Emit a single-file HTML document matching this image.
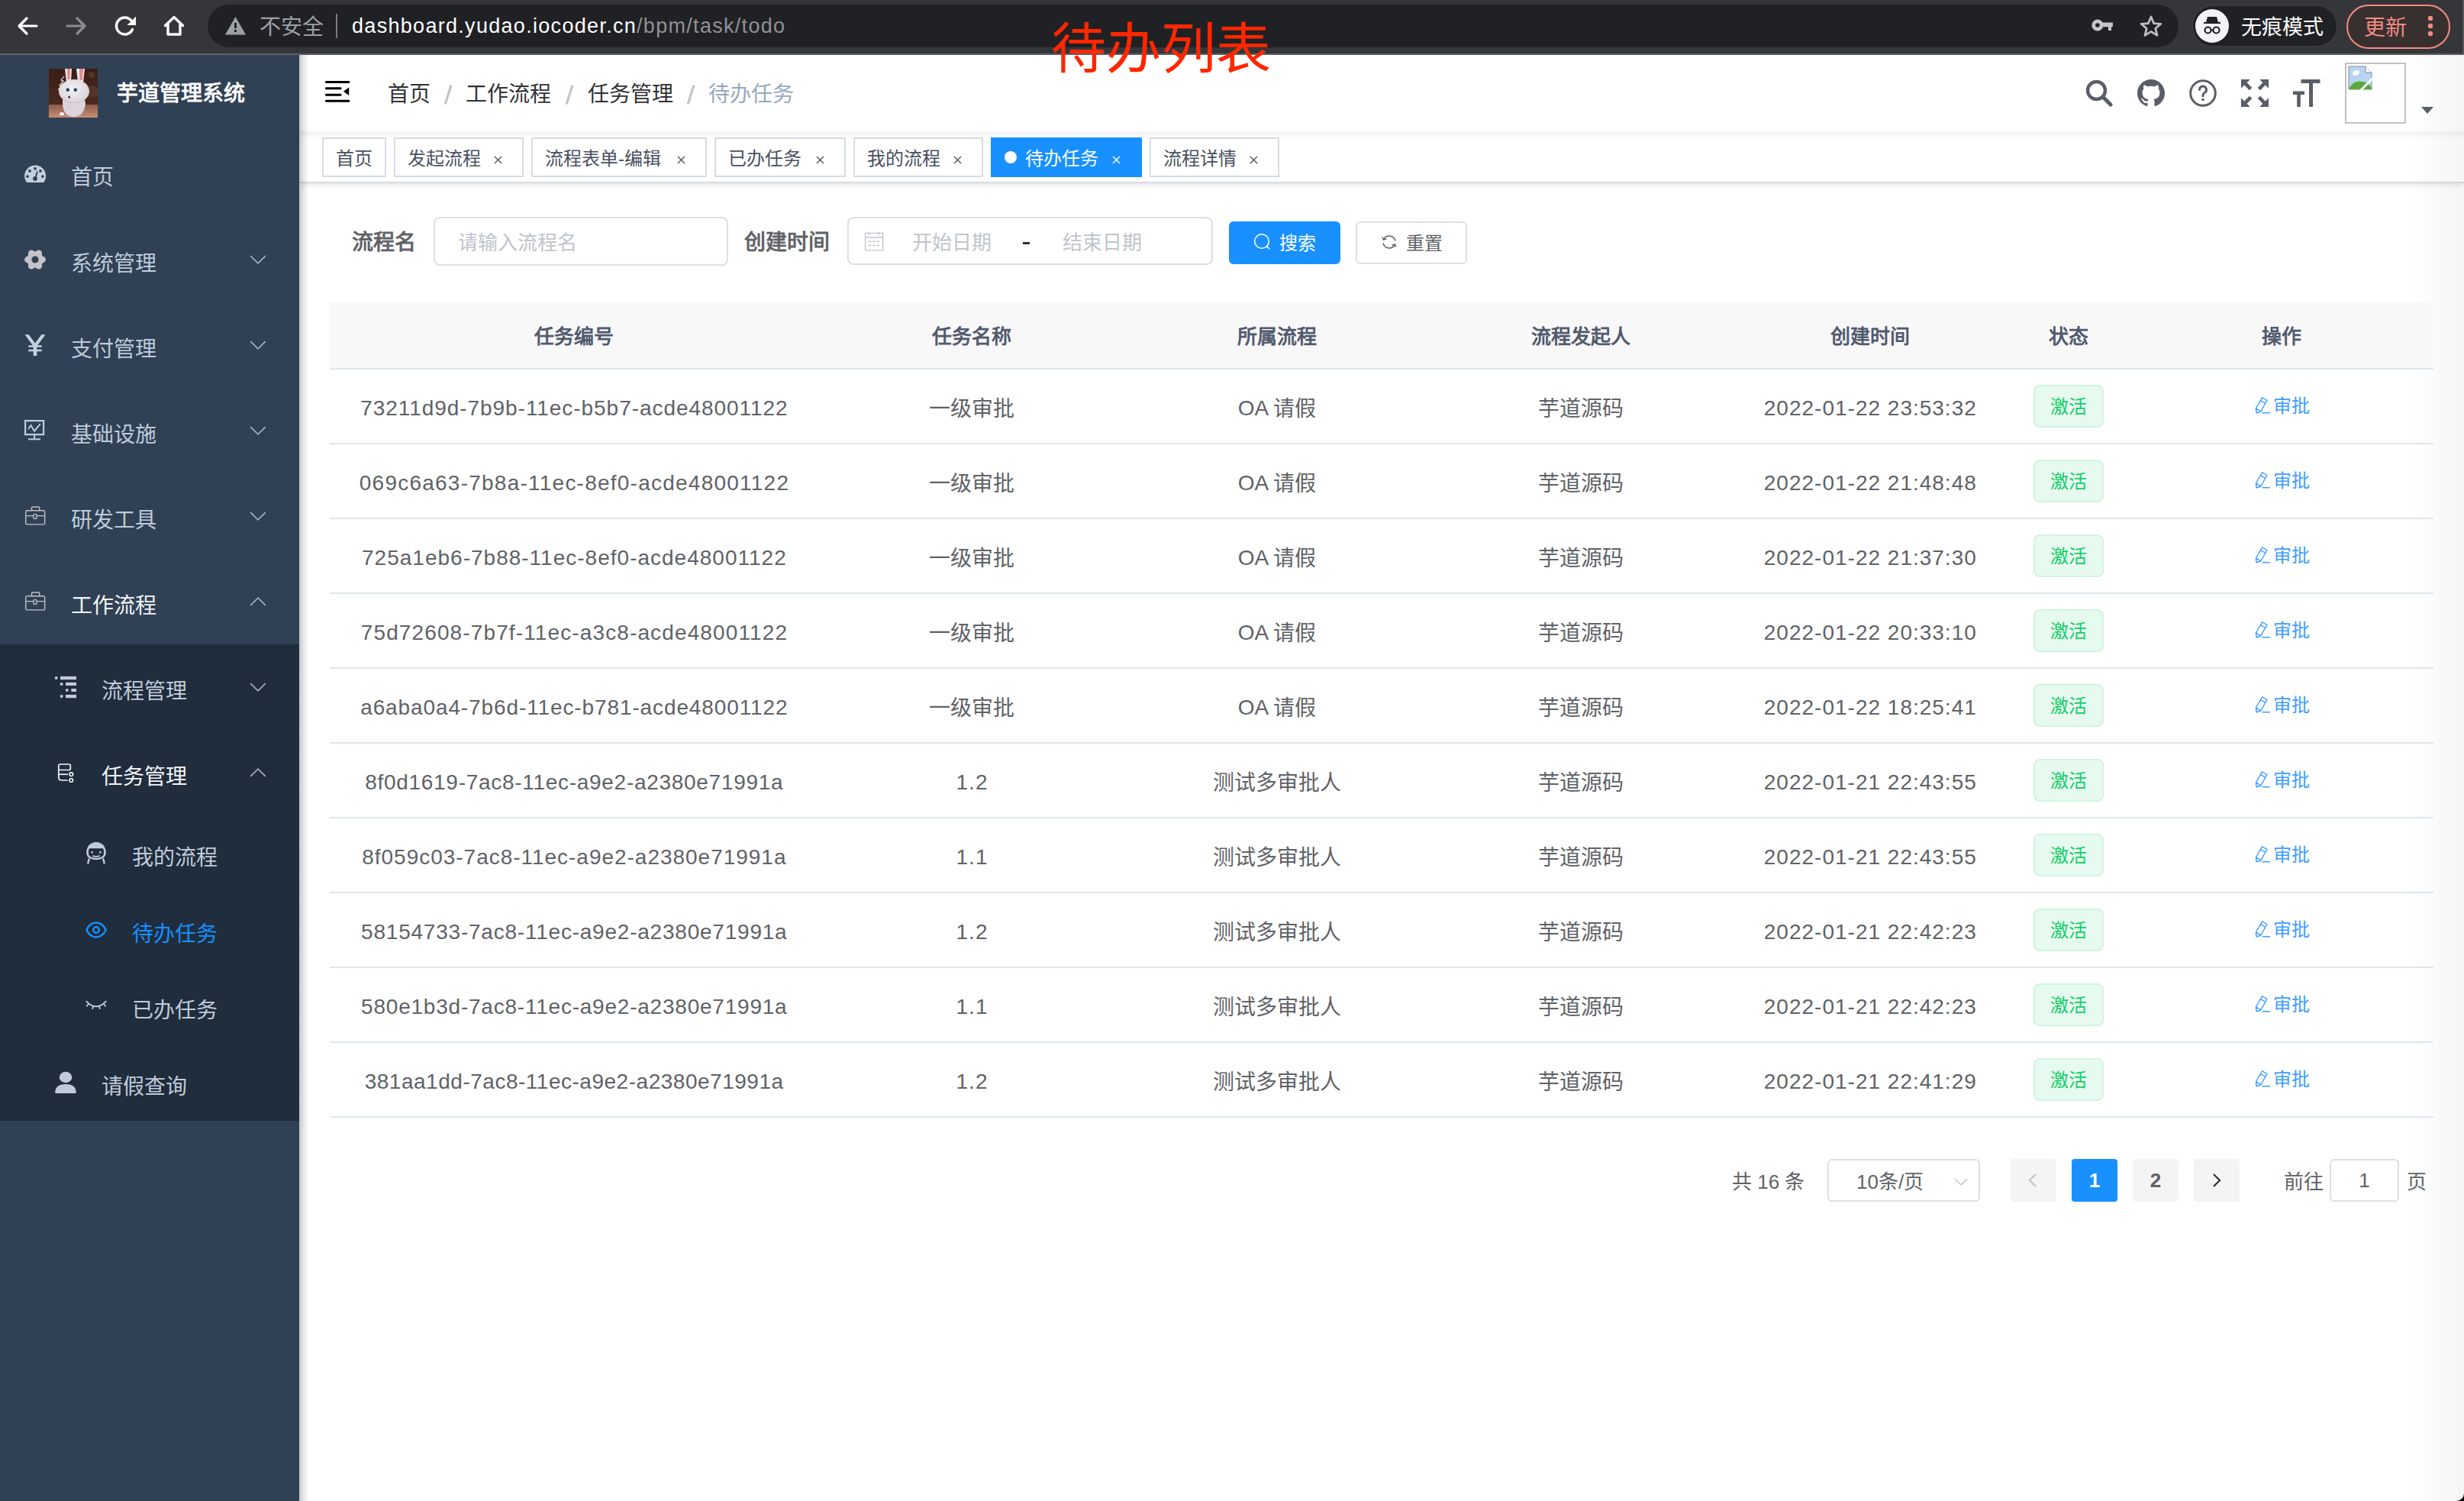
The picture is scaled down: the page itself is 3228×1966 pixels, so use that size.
<!DOCTYPE html>
<html lang="zh-CN">
<head>
<meta charset="utf-8">
<style>
*{box-sizing:border-box;margin:0;padding:0}
html,body{width:3228px;height:1966px;overflow:hidden;background:#fff}
body{position:relative;font-family:"Liberation Sans",sans-serif;color:#606266}
.abs{position:absolute}
.t{position:absolute;white-space:nowrap;line-height:1}
/* toolbar */
#tb{left:0;top:0;width:3228px;height:70px;background:#35363a}
#tbline{left:0;top:70px;width:3228px;height:2px;background:#5f6064}
#omni{left:272px;top:6px;width:2582px;height:56px;border-radius:28px;background:#202124}
/* sidebar */
#side{left:0;top:72px;width:392px;height:1894px;background:#304156}
#sub{left:0;top:844px;width:392px;height:624px;background:#1f2d3d}
.mi{position:absolute;font-size:28px;color:#bfcbd9;line-height:1;white-space:nowrap}
/* navbar */
#nav{left:392px;top:72px;width:2836px;height:100px;background:#fff;}
#tags{left:392px;top:172px;width:2836px;height:68px;background:#fff;border-bottom:2px solid #d8dce5;box-shadow:0 4px 6px -2px rgba(0,0,0,.12)}
.tag{position:absolute;top:180px;height:52px;border:2px solid #d8dce5;background:#fff;color:#495060;font-size:24px;line-height:48px;white-space:nowrap}
.tag .x{position:absolute;top:0;font-size:22px}
#shadowL{left:392px;top:72px;width:14px;height:1894px;background:linear-gradient(90deg,rgba(0,21,41,.24) 0,rgba(0,21,41,.12) 5px,rgba(0,21,41,.03) 10px,rgba(0,21,41,0) 14px)}
.th{position:absolute;top:396px;font-size:26px;font-weight:bold;color:#515a6e;line-height:86px;text-align:center;white-space:nowrap}
.td{position:absolute;font-size:28px;color:#606266;line-height:1;text-align:center;white-space:nowrap}
.stag{position:absolute;left:2664px;width:92px;height:56px;border:2px solid #d0f5e0;background:#e7faf0;border-radius:8px;color:#13ce66;font-size:24px;text-align:center;line-height:54px}
.op{position:absolute;left:2954px;width:80px;height:56px;color:#409eff;font-size:24px;line-height:1}
.rowline{position:absolute;left:432px;width:2756px;height:2px;background:#dfe6ec}
</style>
</head>
<body>
<!-- browser toolbar -->
<div id="tb" class="abs"></div>
<div id="tbline" class="abs"></div>
<div id="omni" class="abs"></div>
<div class="abs" style="left:3226px;top:0;width:2px;height:70px;background:#55565a"></div>

<!-- toolbar icons -->
<svg class="abs" style="left:20px;top:18px" width="32" height="32" viewBox="0 0 32 32"><path d="M28 16H6M15 6L5 16l10 10" fill="none" stroke="#fff" stroke-width="3.2" stroke-linecap="round" stroke-linejoin="round"/></svg>
<svg class="abs" style="left:84px;top:18px" width="32" height="32" viewBox="0 0 32 32"><path d="M4 16h22M17 6l10 10-10 10" fill="none" stroke="#8c8d8f" stroke-width="3.2" stroke-linecap="round" stroke-linejoin="round"/></svg>
<svg class="abs" style="left:148px;top:18px" width="32" height="32" viewBox="0 0 32 32"><path d="M25.5 20.5A11 11 0 1 1 24 9" fill="none" stroke="#fff" stroke-width="3.4" stroke-linecap="round"/><path d="M30 3.5V15H18.5z" fill="#fff"/></svg>
<svg class="abs" style="left:212px;top:18px" width="32" height="32" viewBox="0 0 32 32"><path d="M4.5 15.5L16 4.5l11.5 11M8 13v14h16V13" fill="none" stroke="#fff" stroke-width="3.4" stroke-linecap="round" stroke-linejoin="round"/></svg>
<svg class="abs" style="left:295px;top:22px" width="27" height="24" viewBox="0 0 27 24"><path d="M13.5 0L27 23.5H0z" fill="#9aa0a6"/><rect x="12" y="8" width="3" height="7" fill="#202124"/><rect x="12" y="17" width="3" height="3" fill="#202124"/></svg>
<div class="t" style="left:340px;top:22px;font-size:28px;color:#9aa0a6">不安全</div>
<div class="abs" style="left:440px;top:18px;width:2px;height:32px;background:#7a7b7e"></div>
<div class="t" style="left:461px;top:21px;font-size:27px;color:#fff;letter-spacing:1.3px">dashboard.yudao.iocoder.cn<span style="color:#8f9296">/bpm/task/todo</span></div>
<svg class="abs" style="left:2738px;top:24px" width="32" height="18" viewBox="0 0 32 18"><circle cx="9.9" cy="9" r="5.2" fill="none" stroke="#c6c6c8" stroke-width="4.8"/><path d="M14.5 5.6H29.9V11.2H28V16H24V11.2H14.5z" fill="#c6c6c8"/></svg>
<svg class="abs" style="left:2802px;top:19px" width="32" height="31" viewBox="0 0 32 31"><path d="M16 3l3.6 8.6 9.3.7-7.1 6 2.2 9.1L16 22.4l-8 5 2.2-9.1-7.1-6 9.3-.7z" fill="none" stroke="#bdbdbd" stroke-width="2.8" stroke-linejoin="round"/></svg>
<div class="abs" style="left:2871px;top:6px;width:192px;height:56px;border-radius:28px;background:#202124;border:2px solid #3a3b3f"></div>
<div class="abs" style="left:2876px;top:12px;width:44px;height:44px;border-radius:22px;background:#f1f3f4"></div>
<svg class="abs" style="left:2880px;top:16px" width="36" height="36" viewBox="0 0 36 36"><path d="M12 6h12l2 7H10z" fill="#202124"/><rect x="7" y="13" width="22" height="2" fill="#202124"/><circle cx="12.5" cy="23.5" r="4" fill="none" stroke="#202124" stroke-width="2.2"/><circle cx="23.5" cy="23.5" r="4" fill="none" stroke="#202124" stroke-width="2.2"/><path d="M16.5 23.5h3" stroke="#202124" stroke-width="2"/></svg>
<div class="t" style="left:2936px;top:23px;font-size:27px;color:#fff">无痕模式</div>
<div class="abs" style="left:3074px;top:6px;width:136px;height:58px;border-radius:29px;border:2px solid #f28b82;background:#38302f"></div>
<div class="t" style="left:3097px;top:22.5px;font-size:28px;color:#f28b82">更新</div>
<svg class="abs" style="left:3178px;top:18px" width="12" height="32" viewBox="0 0 12 32"><circle cx="6" cy="6" r="3.2" fill="#f28b82"/><circle cx="6" cy="16" r="3.2" fill="#f28b82"/><circle cx="6" cy="26" r="3.2" fill="#f28b82"/></svg>

<!-- sidebar -->
<div id="side" class="abs"></div>
<div id="sub" class="abs"></div>

<!-- logo -->
<svg class="abs" style="left:64px;top:90px" width="64" height="64" viewBox="0 0 64 64">
<defs><linearGradient id="lg1" x1="0" y1="0" x2="0" y2="1"><stop offset="0" stop-color="#3a1d15"/><stop offset="0.7" stop-color="#4a2a20"/><stop offset="1" stop-color="#5a3426"/></linearGradient>
<linearGradient id="lg2" x1="0" y1="0" x2="0" y2="1"><stop offset="0" stop-color="#8e5a48"/><stop offset="1" stop-color="#c48e76"/></linearGradient>
<radialGradient id="hd" cx="45%" cy="40%" r="60%"><stop offset="0" stop-color="#f4f2f6"/><stop offset="1" stop-color="#d9d2da"/></radialGradient></defs>
<rect width="64" height="64" fill="url(#lg1)"/>
<rect y="47" width="64" height="17" fill="url(#lg2)"/>
<circle cx="57" cy="30" r="8" fill="#5a3a2e" opacity="0.7"/><circle cx="56" cy="8" r="4" fill="#6a4536" opacity="0.6"/>
<path d="M21 0h9l-1 18h-6z" fill="#e9e4e8"/><path d="M24 0h4l-.5 14h-3z" fill="#e08b92"/>
<path d="M36 0h11l-2 18h-7z" fill="#ebe6ea"/><path d="M40 0h5l-1 15h-3.5z" fill="#e08b92"/>
<ellipse cx="33" cy="29.5" rx="20" ry="15.5" fill="url(#hd)"/>
<path d="M18 40q15 10 29 0l1 6q-2 16-14 17h-3q-12-1-13-17z" fill="#ddd3dc"/>
<path d="M14 58q3-2 6 0v3h-6z" fill="#f0eef2"/>
<circle cx="24.8" cy="27.7" r="2.6" fill="#7d9cc7"/><circle cx="24.8" cy="27.7" r="1.6" fill="#1c2230"/>
<circle cx="34.8" cy="27.7" r="2.6" fill="#7d9cc7"/><circle cx="34.8" cy="27.7" r="1.6" fill="#1c2230"/>
<ellipse cx="26.7" cy="37.2" rx="1.3" ry="1.6" fill="#5a2a20"/>
<path d="M20 10l-4 5 3 1-5 6 2 1-4 5" fill="none" stroke="#e6e6e6" stroke-width="1.2"/>
</svg>
<div class="t" style="left:153px;top:109px;font-size:28px;font-weight:bold;color:#fff">芋道管理系统</div>

<!-- menu -->
<svg class="abs" style="left:32px;top:216px" width="28" height="24" viewBox="0 0 28 24"><path d="M2.98 23A14 14 0 1 1 25.22 23z" fill="#c3cfdc"/><g fill="#304156"><circle cx="14" cy="4.9" r="1.85"/><circle cx="7" cy="7.95" r="1.85"/><circle cx="20.95" cy="7.95" r="1.85"/><circle cx="4.05" cy="15.05" r="1.85"/><circle cx="23.9" cy="15.05" r="1.85"/><circle cx="14" cy="17.9" r="2.85"/></g><path d="M16.9 8.6l-2.6 9" stroke="#304156" stroke-width="1.9"/></svg>
<div class="mi" style="left:93px;top:219px">首页</div>
<svg class="abs" style="left:32px;top:326px" width="28" height="28" viewBox="0 0 28 28"><g fill="#c4c4c8"><circle cx="14" cy="14" r="10.8"/><circle cx="23.60" cy="14.00" r="4.3"/><circle cx="18.80" cy="22.31" r="4.3"/><circle cx="9.20" cy="22.31" r="4.3"/><circle cx="4.40" cy="14.00" r="4.3"/><circle cx="9.20" cy="5.69" r="4.3"/><circle cx="18.80" cy="5.69" r="4.3"/></g><circle cx="14" cy="14" r="4.6" fill="#304156"/></svg>
<div class="mi" style="left:93px;top:332px">系统管理</div>
<svg class="abs" style="left:327px;top:334px" width="22" height="12" viewBox="0 0 22 12"><path d="M1.2 1.2l9.8 9.6 9.8-9.6" fill="none" stroke="#a8adb5" stroke-width="1.7"/></svg>
<svg class="abs" style="left:32px;top:438px" width="28" height="28" viewBox="0 0 28 28"><path d="M0.5 0.3h5.2L14 11.6 22.3 0.3h5.2L16.3 15.5V28h-4.6V15.5z" fill="#c6d1de"/><path d="M5.3 15.6h17.4M5.3 21h17.4" stroke="#c6d1de" stroke-width="2.5"/></svg>
<div class="mi" style="left:93px;top:444px">支付管理</div>
<svg class="abs" style="left:327px;top:446px" width="22" height="12" viewBox="0 0 22 12"><path d="M1.2 1.2l9.8 9.6 9.8-9.6" fill="none" stroke="#a8adb5" stroke-width="1.7"/></svg>
<svg class="abs" style="left:32px;top:548px" width="28" height="30" viewBox="0 0 28 30"><path d="M1.1 3.1h24v18h-24z" fill="none" stroke="#bfcbd9" stroke-width="2.2"/><path d="M5 14L8.4 9l4.6 7.7 7.8-9.5" fill="none" stroke="#bfcbd9" stroke-width="2"/><path d="M13 21.2v6M5 27.3h16" stroke="#bfcbd9" stroke-width="2"/></svg>
<div class="mi" style="left:93px;top:556px">基础设施</div>
<svg class="abs" style="left:327px;top:558px" width="22" height="12" viewBox="0 0 22 12"><path d="M1.2 1.2l9.8 9.6 9.8-9.6" fill="none" stroke="#a8adb5" stroke-width="1.7"/></svg>
<svg class="abs" style="left:32px;top:660px" width="28" height="28" viewBox="0 0 28 28"><rect x="1.7" y="8.7" width="25" height="18.2" rx="2" fill="none" stroke="#c0c0c4" stroke-width="1.4"/><path d="M9.5 8.7V5.3q0-1.3 1.3-1.3h7.6q1.3 0 1.3 1.3v3.4" fill="none" stroke="#c0c0c4" stroke-width="1.4"/><path d="M1.7 15.6h10.2M16 15.6h10.7" stroke="#c0c0c4" stroke-width="1.4"/><rect x="12" y="13.6" width="4" height="5.8" rx="1" fill="none" stroke="#c0c0c4" stroke-width="1.4"/></svg>
<div class="mi" style="left:93px;top:668px">研发工具</div>
<svg class="abs" style="left:327px;top:670px" width="22" height="12" viewBox="0 0 22 12"><path d="M1.2 1.2l9.8 9.6 9.8-9.6" fill="none" stroke="#a8adb5" stroke-width="1.7"/></svg>
<svg class="abs" style="left:32px;top:772px" width="28" height="28" viewBox="0 0 28 28"><rect x="1.7" y="8.7" width="25" height="18.2" rx="2" fill="none" stroke="#c0c0c4" stroke-width="1.4"/><path d="M9.5 8.7V5.3q0-1.3 1.3-1.3h7.6q1.3 0 1.3 1.3v3.4" fill="none" stroke="#c0c0c4" stroke-width="1.4"/><path d="M1.7 15.6h10.2M16 15.6h10.7" stroke="#c0c0c4" stroke-width="1.4"/><rect x="12" y="13.6" width="4" height="5.8" rx="1" fill="none" stroke="#c0c0c4" stroke-width="1.4"/></svg>
<div class="mi" style="left:93px;top:780px;color:#f4f4f5">工作流程</div>
<svg class="abs" style="left:327px;top:782px" width="22" height="12" viewBox="0 0 22 12"><path d="M1.2 10.8l9.8-9.6 9.8 9.6" fill="none" stroke="#a8adb5" stroke-width="1.7"/></svg>

<!-- submenu -->
<svg class="abs" style="left:70px;top:882px" width="32" height="36" viewBox="0 0 32 36"><g fill="#bfcbd9"><circle cx="3.6" cy="5.9" r="2"/><rect x="9" y="3.9" width="21" height="4.3"/><circle cx="10.6" cy="14" r="2"/><rect x="16" y="11.8" width="14" height="4.2"/><circle cx="17.7" cy="22" r="2"/><rect x="23.4" y="20" width="6.6" height="4"/><circle cx="10.6" cy="30.1" r="2"/><rect x="16" y="27.9" width="14" height="4.3"/></g></svg>
<div class="mi" style="left:133px;top:892px">流程管理</div>
<svg class="abs" style="left:327px;top:894px" width="22" height="12" viewBox="0 0 22 12"><path d="M1.2 1.2l9.8 9.6 9.8-9.6" fill="none" stroke="#a8adb5" stroke-width="1.7"/></svg>
<svg class="abs" style="left:74px;top:998px" width="26" height="30" viewBox="0 0 26 30"><path d="M2.8 10.5V5q0-2 2-2h11.5q2 0 2 2v3.5q0 2-2 2H2.8M2.8 10.5v9.5q0 4 4 4h8" fill="none" stroke="#f4f4f5" stroke-width="1.7"/><path d="M2.8 16.2H15" stroke="#f4f4f5" stroke-width="1.7"/><circle cx="19.3" cy="16.2" r="2.3" fill="none" stroke="#f4f4f5" stroke-width="1.6"/><circle cx="19.3" cy="24" r="2.3" fill="none" stroke="#f4f4f5" stroke-width="1.6"/></svg>
<div class="mi" style="left:133px;top:1004px;color:#f4f4f5">任务管理</div>
<svg class="abs" style="left:327px;top:1006px" width="22" height="12" viewBox="0 0 22 12"><path d="M1.2 10.8l9.8-9.6 9.8 9.6" fill="none" stroke="#a8adb5" stroke-width="1.7"/></svg>
<svg class="abs" style="left:111px;top:1103px" width="30" height="30" viewBox="0 0 30 30"><path d="M3.5 13.5C3.5 6.5 8.5 1.3 15 1.3s11.5 5.2 11.5 12.2c0 5.5-4.6 8.5-11.5 8.5S3.5 19 3.5 13.5z" fill="none" stroke="#bfcbd9" stroke-width="2.6"/><path d="M4 8.3q0-7 11-7t11 7z" fill="#bfcbd9"/><circle cx="9.6" cy="13.3" r="1.4" fill="#bfcbd9"/><circle cx="20.4" cy="13.3" r="1.4" fill="#bfcbd9"/><path d="M10.2 17.8q4.8 2 9.6 0" fill="none" stroke="#bfcbd9" stroke-width="1.8"/><path d="M6.3 21.5Q4.5 24 4.3 28.5M23.7 21.5q1.8 2.5 2 7" fill="none" stroke="#bfcbd9" stroke-width="2.4"/></svg>
<div class="mi" style="left:173px;top:1110px">我的流程</div>
<svg class="abs" style="left:111px;top:1206px" width="30" height="24" viewBox="0 0 30 24"><path d="M2.3 12C5.5 5.5 10 2.6 15 2.6s9.5 2.9 12.7 9.4C24.5 18.5 20 21.4 15 21.4S5.5 18.5 2.3 12z" fill="none" stroke="#1890ff" stroke-width="2.5"/><circle cx="15" cy="12" r="3.8" fill="none" stroke="#1890ff" stroke-width="2.5"/></svg>
<div class="mi" style="left:173px;top:1210px;color:#1890ff">待办任务</div>
<svg class="abs" style="left:111px;top:1309px" width="30" height="18" viewBox="0 0 30 18"><path d="M1.8 2.2Q8 9.3 15 9.3t13.2-7.1" fill="none" stroke="#bfcbd9" stroke-width="1.9"/><path d="M4.8 6.2L2.5 9.3M11 8.5l-.9 4.4M19 8.5l.9 4.4M25.2 6.2l2.3 3.1" stroke="#bfcbd9" stroke-width="1.9"/></svg>
<div class="mi" style="left:173px;top:1310px">已办任务</div>
<svg class="abs" style="left:72px;top:1403px" width="28" height="30" viewBox="0 0 28 30"><ellipse cx="14" cy="8" rx="8.3" ry="7.2" fill="#bfcbd9"/><path d="M0.2 27.5C0.5 21 5 17 14 17s13.5 4 13.8 10.5q0 1.5-1.5 1.5H1.7q-1.5 0-1.5-1.5z" fill="#bfcbd9"/></svg>
<div class="mi" style="left:133px;top:1410px">请假查询</div>

<!-- navbar -->
<div id="nav" class="abs"></div>
<div id="tags" class="abs"></div>
<div id="shadowL" class="abs"></div>

<!-- navbar content -->
<svg class="abs" style="left:426px;top:105px" width="32" height="30" viewBox="0 0 32 30"><g stroke="#000" stroke-width="3.1" stroke-linecap="round"><path d="M1.5 2.5h29.5M1.5 10.8h18.5M1.5 19.2h18.5M1.5 27.3h29.5"/></g><path d="M31.2 9.6v10.4l-7.2-5.2z" fill="#000"/></svg>
<div class="t" style="left:508px;top:110px;font-size:28px;color:#303133">首页</div>
<svg class="abs" style="left:581px;top:110px" width="12" height="28" viewBox="0 0 12 28"><path d="M2.2 26.5L10 1.5" stroke="#c0c4cc" stroke-width="3.2"/></svg>
<div class="t" style="left:610px;top:110px;font-size:28px;color:#303133">工作流程</div>
<svg class="abs" style="left:740px;top:110px" width="12" height="28" viewBox="0 0 12 28"><path d="M2.2 26.5L10 1.5" stroke="#c0c4cc" stroke-width="3.2"/></svg>
<div class="t" style="left:770px;top:110px;font-size:28px;color:#303133">任务管理</div>
<svg class="abs" style="left:899px;top:110px" width="12" height="28" viewBox="0 0 12 28"><path d="M2.2 26.5L10 1.5" stroke="#c0c4cc" stroke-width="3.2"/></svg>
<div class="t" style="left:928px;top:110px;font-size:28px;color:#97a8be">待办任务</div>

<svg class="abs" style="left:2732px;top:104px" width="36" height="36" viewBox="0 0 36 36"><circle cx="14.5" cy="14.5" r="11.5" fill="none" stroke="#5a5e66" stroke-width="4.4"/><path d="M23 23l10 10" stroke="#5a5e66" stroke-width="5" stroke-linecap="round"/></svg>
<svg class="abs" style="left:2800px;top:104px" width="36" height="36" viewBox="0 0 16 16"><path fill="#5a5e66" d="M8 0C3.58 0 0 3.58 0 8c0 3.54 2.29 6.53 5.47 7.59.4.07.55-.17.55-.38 0-.19-.01-.82-.01-1.49-2.01.37-2.53-.49-2.69-.94-.09-.23-.48-.94-.82-1.13-.28-.15-.68-.52-.01-.53.63-.01 1.08.58 1.23.82.72 1.21 1.87.87 2.33.66.07-.52.28-.87.51-1.07-1.78-.2-3.64-.89-3.64-3.95 0-.87.31-1.59.82-2.15-.08-.2-.36-1.02.08-2.12 0 0 .67-.21 2.2.82.64-.18 1.32-.27 2-.27.68 0 1.36.09 2 .27 1.53-1.04 2.2-.82 2.2-.82.44 1.1.16 1.92.08 2.12.51.56.82 1.27.82 2.15 0 3.07-1.87 3.75-3.65 3.95.29.25.54.73.54 1.48 0 1.07-.01 1.93-.01 2.2 0 .21.15.46.55.38A8.013 8.013 0 0016 8c0-4.42-3.58-8-8-8z"/></svg>
<svg class="abs" style="left:2868px;top:104px" width="36" height="36" viewBox="0 0 36 36"><circle cx="18" cy="18" r="16.3" fill="none" stroke="#5a5e66" stroke-width="3"/><path d="M13.5 13.5a4.5 4.5 0 1 1 6.5 4c-1.3.8-2 1.5-2 3.2v1" fill="none" stroke="#5a5e66" stroke-width="3" stroke-linecap="round"/><circle cx="18" cy="26.5" r="1.8" fill="#5a5e66"/></svg>
<svg class="abs" style="left:2936px;top:104px" width="36" height="36" viewBox="0 0 36 36"><path fill="#5a5e66" d="M0 0H11.8L7.6 4.2L14.3 10.9L10.9 14.3L4.2 7.6L0 11.8zM36 0V11.8L31.8 7.6L25.1 14.3L21.7 10.9L28.4 4.2L24.2 0zM0 36V24.2L4.2 28.4L10.9 21.7L14.3 25.1L7.6 31.8L11.8 36zM36 36H24.2L28.4 31.8L21.7 25.1L25.1 21.7L31.8 28.4L36 24.2z"/></svg>
<svg class="abs" style="left:3004px;top:104px" width="36" height="36" viewBox="0 0 36 36"><path d="M10.5 0h25v5H26v31h-5V5h-10.5zM0 15.5h15v4.5H9.8V36H5.2V20H0z" fill="#5a5e66"/></svg>
<div class="abs" style="left:3072px;top:82px;width:80px;height:80px;border:2px solid #c1c1c1"></div>
<svg class="abs" style="left:3076px;top:86px" width="32" height="32" viewBox="0 0 32 32"><path d="M1 1h22l8 8v22H1z" fill="#b9d4f3" stroke="#8a8a8a" stroke-width="1"/><path d="M23 1v8h8" fill="#fff" stroke="#8a8a8a" stroke-width="1"/><path d="M1 31C5 22 12 19 20 21s10 6 11 10z" fill="#5aa83e"/><circle cx="9" cy="10" r="3" fill="#fff"/><circle cx="12" cy="9" r="3" fill="#fff"/><path d="M16 33L33 16" stroke="#fff" stroke-width="3"/></svg>
<svg class="abs" style="left:3172px;top:140px" width="16" height="10" viewBox="0 0 16 10"><path d="M0 0h16L8 9z" fill="#5a5e66"/></svg>

<!-- tags -->
<div class="tag" style="left:422px;width:84px"></div>
<div class="t" style="left:440px;top:196px;font-size:24px;color:#495060">首页</div>
<div class="tag" style="left:516px;width:170px"></div>
<div class="t" style="left:534px;top:196px;font-size:24px;color:#495060">发起流程</div>
<svg class="abs" style="left:647px;top:204px" width="11" height="11" viewBox="0 0 11 11"><path d="M1 1l9 9M10 1l-9 9" stroke="#495060" stroke-width="1.4"/></svg>
<div class="tag" style="left:696px;width:230px"></div>
<div class="t" style="left:714px;top:196px;font-size:24px;color:#495060">流程表单-编辑</div>
<svg class="abs" style="left:887px;top:204px" width="11" height="11" viewBox="0 0 11 11"><path d="M1 1l9 9M10 1l-9 9" stroke="#495060" stroke-width="1.4"/></svg>
<div class="tag" style="left:936px;width:172px"></div>
<div class="t" style="left:954px;top:196px;font-size:24px;color:#495060">已办任务</div>
<svg class="abs" style="left:1069px;top:204px" width="11" height="11" viewBox="0 0 11 11"><path d="M1 1l9 9M10 1l-9 9" stroke="#495060" stroke-width="1.4"/></svg>
<div class="tag" style="left:1118px;width:170px"></div>
<div class="t" style="left:1136px;top:196px;font-size:24px;color:#495060">我的流程</div>
<svg class="abs" style="left:1249px;top:204px" width="11" height="11" viewBox="0 0 11 11"><path d="M1 1l9 9M10 1l-9 9" stroke="#495060" stroke-width="1.4"/></svg>
<div class="tag" style="left:1298px;width:198px;background:#1890ff;border-color:#1890ff"></div>
<div class="abs" style="left:1316px;top:198px;width:16px;height:16px;border-radius:8px;background:#fff"></div>
<div class="t" style="left:1343px;top:196px;font-size:24px;color:#fff">待办任务</div>
<svg class="abs" style="left:1457px;top:204px" width="11" height="11" viewBox="0 0 11 11"><path d="M1 1l9 9M10 1l-9 9" stroke="#fff" stroke-width="1.4"/></svg>
<div class="tag" style="left:1506px;width:170px"></div>
<div class="t" style="left:1524px;top:196px;font-size:24px;color:#495060">流程详情</div>
<svg class="abs" style="left:1637px;top:204px" width="11" height="11" viewBox="0 0 11 11"><path d="M1 1l9 9M10 1l-9 9" stroke="#495060" stroke-width="1.4"/></svg>

<div class="abs" style="left:392px;top:172px;width:2836px;height:10px;background:linear-gradient(rgba(0,21,41,.06),rgba(0,21,41,0))"></div>
<!-- right edge shade -->
<div class="abs" style="left:3158px;top:72px;width:70px;height:1894px;background:linear-gradient(90deg,rgba(0,20,40,0) 0,rgba(0,20,40,.02) 45%,rgba(0,20,40,.045) 100%)"></div>

<!-- form -->
<div class="t" style="left:461px;top:304px;font-size:28px;font-weight:bold;color:#606266">流程名</div>
<div class="abs" style="left:568px;top:284px;width:386px;height:64px;border:2px solid #dcdfe6;border-radius:8px"></div>
<div class="t" style="left:600px;top:305px;font-size:26px;color:#c0c4cc">请输入流程名</div>
<div class="t" style="left:975px;top:304px;font-size:28px;font-weight:bold;color:#606266">创建时间</div>
<div class="abs" style="left:1110px;top:284px;width:479px;height:63px;border:2px solid #dcdfe6;border-radius:8px"></div>
<svg class="abs" style="left:1132px;top:303px" width="26" height="26" viewBox="0 0 26 26"><path d="M1.6 2.3h23v22.5h-23zM1.6 8h23" fill="none" stroke="#c0c4cc" stroke-width="1.3"/><path d="M6.5 0.5v4.5M19 0.5v4.5" stroke="#c0c4cc" stroke-width="1.3"/><path d="M5.8 13.2h2.6M11.4 13.2h2.6M17 13.2h2.6M5.8 18.5h2.6M11.4 18.5h2.6M17 18.5h2.6" stroke="#c0c4cc" stroke-width="1.5" stroke-linecap="round"/></svg>
<div class="t" style="left:1195px;top:305px;font-size:26px;color:#c0c4cc">开始日期</div>
<div class="abs" style="left:1340px;top:317px;width:9px;height:2.6px;background:#303133"></div>
<div class="t" style="left:1392px;top:305px;font-size:26px;color:#c0c4cc">结束日期</div>
<div class="abs" style="left:1610px;top:290px;width:146px;height:56px;border-radius:6px;background:#1890ff"></div>
<svg class="abs" style="left:1642px;top:305px" width="24" height="24" viewBox="0 0 24 24"><circle cx="11" cy="11" r="9.3" fill="none" stroke="#fff" stroke-width="1.5"/><path d="M17.6 17.6l3.6 3.6" stroke="#fff" stroke-width="1.6"/></svg>
<div class="t" style="left:1676px;top:307px;font-size:24px;color:#fff">搜索</div>
<div class="abs" style="left:1776px;top:290px;width:146px;height:56px;border-radius:6px;border:2px solid #dcdfe6;background:#fff"></div>
<svg class="abs" style="left:1809px;top:306px" width="22" height="22" viewBox="0 0 22 22"><path d="M4 7A8.2 8.2 0 0 1 19 9.5M18 15A8.2 8.2 0 0 1 3 12.5" fill="none" stroke="#606266" stroke-width="1.5"/><path d="M2 4.5l1.6 3.6 3.7-1.4M20 17.5l-1.6-3.6-3.7 1.4" fill="none" stroke="#606266" stroke-width="1.5"/></svg>
<div class="t" style="left:1842px;top:307px;font-size:24px;color:#606266">重置</div>

<!-- table header -->
<div class="abs" style="left:432px;top:396px;width:2756px;height:86px;background:#f8f8f9"></div>
<div class="rowline" style="top:482px"></div>
<div class="th" style="left:601.9px;width:300px;top:398px">任务编号</div>
<div class="th" style="left:1123.0px;width:300px;top:398px">任务名称</div>
<div class="th" style="left:1523.0px;width:300px;top:398px">所属流程</div>
<div class="th" style="left:1921.0px;width:300px;top:398px">流程发起人</div>
<div class="th" style="left:2299.8px;width:300px;top:398px">创建时间</div>
<div class="th" style="left:2560.0px;width:300px;top:398px">状态</div>
<div class="th" style="left:2838.8px;width:300px;top:398px">操作</div>
<div class="td" style="left:351.9px;top:520.6px;width:800px;font-size:28px;letter-spacing:0.946px;text-indent:0.946px">73211d9d-7b9b-11ec-b5b7-acde48001122</div>
<div class="td" style="left:873.0px;top:522.1px;width:800px">一级审批</div>
<div class="td" style="left:1273.0px;top:520.6px;width:800px">OA <span style="position:relative;top:1.5px">请假</span></div>
<div class="td" style="left:1671.0px;top:522.1px;width:800px">芋道源码</div>
<div class="td" style="left:2049.8px;top:520.6px;width:800px;font-size:28px;letter-spacing:1.000px;text-indent:1.000px">2022-01-22 23:53:32</div>
<div class="stag" style="top:504px">激活</div>
<div class="op" style="top:504px"><svg width="20" height="22" viewBox="0 0 20 22" style="position:absolute;left:0;top:16px"><path d="M9.6 0.9L16 4.5 7.6 19.2 2.1 20.7 1.4 15zM7.4 4.7l6.2 3.5M1.6 15.1l6 3.5M9.5 20.7h10.4" fill="none" stroke="#409eff" stroke-width="1.4" stroke-linejoin="round"/></svg><span style="position:absolute;left:24px;top:15.5px">审批</span></div>
<div class="rowline" style="top:580px"></div>
<div class="td" style="left:351.9px;top:618.6px;width:800px;font-size:28px;letter-spacing:1.237px;text-indent:1.237px">069c6a63-7b8a-11ec-8ef0-acde48001122</div>
<div class="td" style="left:873.0px;top:620.1px;width:800px">一级审批</div>
<div class="td" style="left:1273.0px;top:618.6px;width:800px">OA <span style="position:relative;top:1.5px">请假</span></div>
<div class="td" style="left:1671.0px;top:620.1px;width:800px">芋道源码</div>
<div class="td" style="left:2049.8px;top:618.6px;width:800px;font-size:28px;letter-spacing:1.000px;text-indent:1.000px">2022-01-22 21:48:48</div>
<div class="stag" style="top:602px">激活</div>
<div class="op" style="top:602px"><svg width="20" height="22" viewBox="0 0 20 22" style="position:absolute;left:0;top:16px"><path d="M9.6 0.9L16 4.5 7.6 19.2 2.1 20.7 1.4 15zM7.4 4.7l6.2 3.5M1.6 15.1l6 3.5M9.5 20.7h10.4" fill="none" stroke="#409eff" stroke-width="1.4" stroke-linejoin="round"/></svg><span style="position:absolute;left:24px;top:15.5px">审批</span></div>
<div class="rowline" style="top:678px"></div>
<div class="td" style="left:351.9px;top:716.6px;width:800px;font-size:28px;letter-spacing:1.006px;text-indent:1.006px">725a1eb6-7b88-11ec-8ef0-acde48001122</div>
<div class="td" style="left:873.0px;top:718.1px;width:800px">一级审批</div>
<div class="td" style="left:1273.0px;top:716.6px;width:800px">OA <span style="position:relative;top:1.5px">请假</span></div>
<div class="td" style="left:1671.0px;top:718.1px;width:800px">芋道源码</div>
<div class="td" style="left:2049.8px;top:716.6px;width:800px;font-size:28px;letter-spacing:1.000px;text-indent:1.000px">2022-01-22 21:37:30</div>
<div class="stag" style="top:700px">激活</div>
<div class="op" style="top:700px"><svg width="20" height="22" viewBox="0 0 20 22" style="position:absolute;left:0;top:16px"><path d="M9.6 0.9L16 4.5 7.6 19.2 2.1 20.7 1.4 15zM7.4 4.7l6.2 3.5M1.6 15.1l6 3.5M9.5 20.7h10.4" fill="none" stroke="#409eff" stroke-width="1.4" stroke-linejoin="round"/></svg><span style="position:absolute;left:24px;top:15.5px">审批</span></div>
<div class="rowline" style="top:776px"></div>
<div class="td" style="left:351.9px;top:814.6px;width:800px;font-size:28px;letter-spacing:1.123px;text-indent:1.123px">75d72608-7b7f-11ec-a3c8-acde48001122</div>
<div class="td" style="left:873.0px;top:816.1px;width:800px">一级审批</div>
<div class="td" style="left:1273.0px;top:814.6px;width:800px">OA <span style="position:relative;top:1.5px">请假</span></div>
<div class="td" style="left:1671.0px;top:816.1px;width:800px">芋道源码</div>
<div class="td" style="left:2049.8px;top:814.6px;width:800px;font-size:28px;letter-spacing:1.000px;text-indent:1.000px">2022-01-22 20:33:10</div>
<div class="stag" style="top:798px">激活</div>
<div class="op" style="top:798px"><svg width="20" height="22" viewBox="0 0 20 22" style="position:absolute;left:0;top:16px"><path d="M9.6 0.9L16 4.5 7.6 19.2 2.1 20.7 1.4 15zM7.4 4.7l6.2 3.5M1.6 15.1l6 3.5M9.5 20.7h10.4" fill="none" stroke="#409eff" stroke-width="1.4" stroke-linejoin="round"/></svg><span style="position:absolute;left:24px;top:15.5px">审批</span></div>
<div class="rowline" style="top:874px"></div>
<div class="td" style="left:351.9px;top:912.6px;width:800px;font-size:28px;letter-spacing:0.889px;text-indent:0.889px">a6aba0a4-7b6d-11ec-b781-acde48001122</div>
<div class="td" style="left:873.0px;top:914.1px;width:800px">一级审批</div>
<div class="td" style="left:1273.0px;top:912.6px;width:800px">OA <span style="position:relative;top:1.5px">请假</span></div>
<div class="td" style="left:1671.0px;top:914.1px;width:800px">芋道源码</div>
<div class="td" style="left:2049.8px;top:912.6px;width:800px;font-size:28px;letter-spacing:1.000px;text-indent:1.000px">2022-01-22 18:25:41</div>
<div class="stag" style="top:896px">激活</div>
<div class="op" style="top:896px"><svg width="20" height="22" viewBox="0 0 20 22" style="position:absolute;left:0;top:16px"><path d="M9.6 0.9L16 4.5 7.6 19.2 2.1 20.7 1.4 15zM7.4 4.7l6.2 3.5M1.6 15.1l6 3.5M9.5 20.7h10.4" fill="none" stroke="#409eff" stroke-width="1.4" stroke-linejoin="round"/></svg><span style="position:absolute;left:24px;top:15.5px">审批</span></div>
<div class="rowline" style="top:972px"></div>
<div class="td" style="left:351.9px;top:1010.6px;width:800px;font-size:28px;letter-spacing:0.709px;text-indent:0.709px">8f0d1619-7ac8-11ec-a9e2-a2380e71991a</div>
<div class="td" style="left:873.0px;top:1010.6px;width:800px;font-size:28px;letter-spacing:1.000px;text-indent:1.000px">1.2</div>
<div class="td" style="left:1273.0px;top:1012.1px;width:800px">测试多审批人</div>
<div class="td" style="left:1671.0px;top:1012.1px;width:800px">芋道源码</div>
<div class="td" style="left:2049.8px;top:1010.6px;width:800px;font-size:28px;letter-spacing:1.000px;text-indent:1.000px">2022-01-21 22:43:55</div>
<div class="stag" style="top:994px">激活</div>
<div class="op" style="top:994px"><svg width="20" height="22" viewBox="0 0 20 22" style="position:absolute;left:0;top:16px"><path d="M9.6 0.9L16 4.5 7.6 19.2 2.1 20.7 1.4 15zM7.4 4.7l6.2 3.5M1.6 15.1l6 3.5M9.5 20.7h10.4" fill="none" stroke="#409eff" stroke-width="1.4" stroke-linejoin="round"/></svg><span style="position:absolute;left:24px;top:15.5px">审批</span></div>
<div class="rowline" style="top:1070px"></div>
<div class="td" style="left:351.9px;top:1108.6px;width:800px;font-size:28px;letter-spacing:0.977px;text-indent:0.977px">8f059c03-7ac8-11ec-a9e2-a2380e71991a</div>
<div class="td" style="left:873.0px;top:1108.6px;width:800px;font-size:28px;letter-spacing:1.000px;text-indent:1.000px">1.1</div>
<div class="td" style="left:1273.0px;top:1110.1px;width:800px">测试多审批人</div>
<div class="td" style="left:1671.0px;top:1110.1px;width:800px">芋道源码</div>
<div class="td" style="left:2049.8px;top:1108.6px;width:800px;font-size:28px;letter-spacing:1.000px;text-indent:1.000px">2022-01-21 22:43:55</div>
<div class="stag" style="top:1092px">激活</div>
<div class="op" style="top:1092px"><svg width="20" height="22" viewBox="0 0 20 22" style="position:absolute;left:0;top:16px"><path d="M9.6 0.9L16 4.5 7.6 19.2 2.1 20.7 1.4 15zM7.4 4.7l6.2 3.5M1.6 15.1l6 3.5M9.5 20.7h10.4" fill="none" stroke="#409eff" stroke-width="1.4" stroke-linejoin="round"/></svg><span style="position:absolute;left:24px;top:15.5px">审批</span></div>
<div class="rowline" style="top:1168px"></div>
<div class="td" style="left:351.9px;top:1206.6px;width:800px;font-size:28px;letter-spacing:0.777px;text-indent:0.777px">58154733-7ac8-11ec-a9e2-a2380e71991a</div>
<div class="td" style="left:873.0px;top:1206.6px;width:800px;font-size:28px;letter-spacing:1.000px;text-indent:1.000px">1.2</div>
<div class="td" style="left:1273.0px;top:1208.1px;width:800px">测试多审批人</div>
<div class="td" style="left:1671.0px;top:1208.1px;width:800px">芋道源码</div>
<div class="td" style="left:2049.8px;top:1206.6px;width:800px;font-size:28px;letter-spacing:1.000px;text-indent:1.000px">2022-01-21 22:42:23</div>
<div class="stag" style="top:1190px">激活</div>
<div class="op" style="top:1190px"><svg width="20" height="22" viewBox="0 0 20 22" style="position:absolute;left:0;top:16px"><path d="M9.6 0.9L16 4.5 7.6 19.2 2.1 20.7 1.4 15zM7.4 4.7l6.2 3.5M1.6 15.1l6 3.5M9.5 20.7h10.4" fill="none" stroke="#409eff" stroke-width="1.4" stroke-linejoin="round"/></svg><span style="position:absolute;left:24px;top:15.5px">审批</span></div>
<div class="rowline" style="top:1266px"></div>
<div class="td" style="left:351.9px;top:1304.6px;width:800px;font-size:28px;letter-spacing:0.777px;text-indent:0.777px">580e1b3d-7ac8-11ec-a9e2-a2380e71991a</div>
<div class="td" style="left:873.0px;top:1304.6px;width:800px;font-size:28px;letter-spacing:1.000px;text-indent:1.000px">1.1</div>
<div class="td" style="left:1273.0px;top:1306.1px;width:800px">测试多审批人</div>
<div class="td" style="left:1671.0px;top:1306.1px;width:800px">芋道源码</div>
<div class="td" style="left:2049.8px;top:1304.6px;width:800px;font-size:28px;letter-spacing:1.000px;text-indent:1.000px">2022-01-21 22:42:23</div>
<div class="stag" style="top:1288px">激活</div>
<div class="op" style="top:1288px"><svg width="20" height="22" viewBox="0 0 20 22" style="position:absolute;left:0;top:16px"><path d="M9.6 0.9L16 4.5 7.6 19.2 2.1 20.7 1.4 15zM7.4 4.7l6.2 3.5M1.6 15.1l6 3.5M9.5 20.7h10.4" fill="none" stroke="#409eff" stroke-width="1.4" stroke-linejoin="round"/></svg><span style="position:absolute;left:24px;top:15.5px">审批</span></div>
<div class="rowline" style="top:1364px"></div>
<div class="td" style="left:351.9px;top:1402.6px;width:800px;font-size:28px;letter-spacing:0.514px;text-indent:0.514px">381aa1dd-7ac8-11ec-a9e2-a2380e71991a</div>
<div class="td" style="left:873.0px;top:1402.6px;width:800px;font-size:28px;letter-spacing:1.000px;text-indent:1.000px">1.2</div>
<div class="td" style="left:1273.0px;top:1404.1px;width:800px">测试多审批人</div>
<div class="td" style="left:1671.0px;top:1404.1px;width:800px">芋道源码</div>
<div class="td" style="left:2049.8px;top:1402.6px;width:800px;font-size:28px;letter-spacing:1.000px;text-indent:1.000px">2022-01-21 22:41:29</div>
<div class="stag" style="top:1386px">激活</div>
<div class="op" style="top:1386px"><svg width="20" height="22" viewBox="0 0 20 22" style="position:absolute;left:0;top:16px"><path d="M9.6 0.9L16 4.5 7.6 19.2 2.1 20.7 1.4 15zM7.4 4.7l6.2 3.5M1.6 15.1l6 3.5M9.5 20.7h10.4" fill="none" stroke="#409eff" stroke-width="1.4" stroke-linejoin="round"/></svg><span style="position:absolute;left:24px;top:15.5px">审批</span></div>
<div class="rowline" style="top:1462px"></div>
<!-- pagination -->
<div class="t" style="left:2269px;top:1535px;font-size:26px;color:#606266">共 16 条</div>
<div class="abs" style="left:2394px;top:1518px;width:200px;height:56px;border:2px solid #dcdfe6;border-radius:6px"></div>
<div class="t" style="left:2432px;top:1535px;font-size:26px;color:#606266">10条/页</div>
<svg class="abs" style="left:2560px;top:1542px" width="18" height="12" viewBox="0 0 18 12"><path d="M1 2l8 8 8-8" fill="none" stroke="#c0c4cc" stroke-width="1.5"/></svg>
<div class="abs" style="left:2634px;top:1518px;width:60px;height:56px;border-radius:4px;background:#f4f4f5"></div>
<svg class="abs" style="left:2656px;top:1536px" width="14" height="20" viewBox="0 0 14 20"><path d="M11 2L3 10l8 8" fill="none" stroke="#c0c4cc" stroke-width="2.2"/></svg>
<div class="abs" style="left:2714px;top:1518px;width:60px;height:56px;border-radius:4px;background:#1890ff;color:#fff;font-size:26px;font-weight:bold;text-align:center;line-height:56px">1</div>
<div class="abs" style="left:2794px;top:1518px;width:60px;height:56px;border-radius:4px;background:#f4f4f5;color:#606266;font-size:26px;font-weight:bold;text-align:center;line-height:56px">2</div>
<div class="abs" style="left:2874px;top:1518px;width:60px;height:56px;border-radius:4px;background:#f4f4f5"></div>
<svg class="abs" style="left:2897px;top:1536px" width="14" height="20" viewBox="0 0 14 20"><path d="M3 2l8 8-8 8" fill="none" stroke="#303133" stroke-width="2.2"/></svg>
<div class="t" style="left:2992px;top:1535px;font-size:26px;color:#606266">前往</div>
<div class="abs" style="left:3052px;top:1518px;width:91px;height:56px;border:2px solid #dcdfe6;border-radius:6px;color:#606266;font-size:26px;text-align:center;line-height:52px">1</div>
<div class="t" style="left:3153px;top:1535px;font-size:26px;color:#606266">页</div>

<svg class="abs" style="left:3218px;top:1956px" width="10" height="10" viewBox="0 0 10 10"><path d="M10 0A10 10 0 0 1 0 10H10z" fill="#000"/></svg>

<!-- annotation -->
<div class="t" style="left:1377px;top:28px;font-size:72px;color:#ff2600">待办列表</div>

</body>
</html>
